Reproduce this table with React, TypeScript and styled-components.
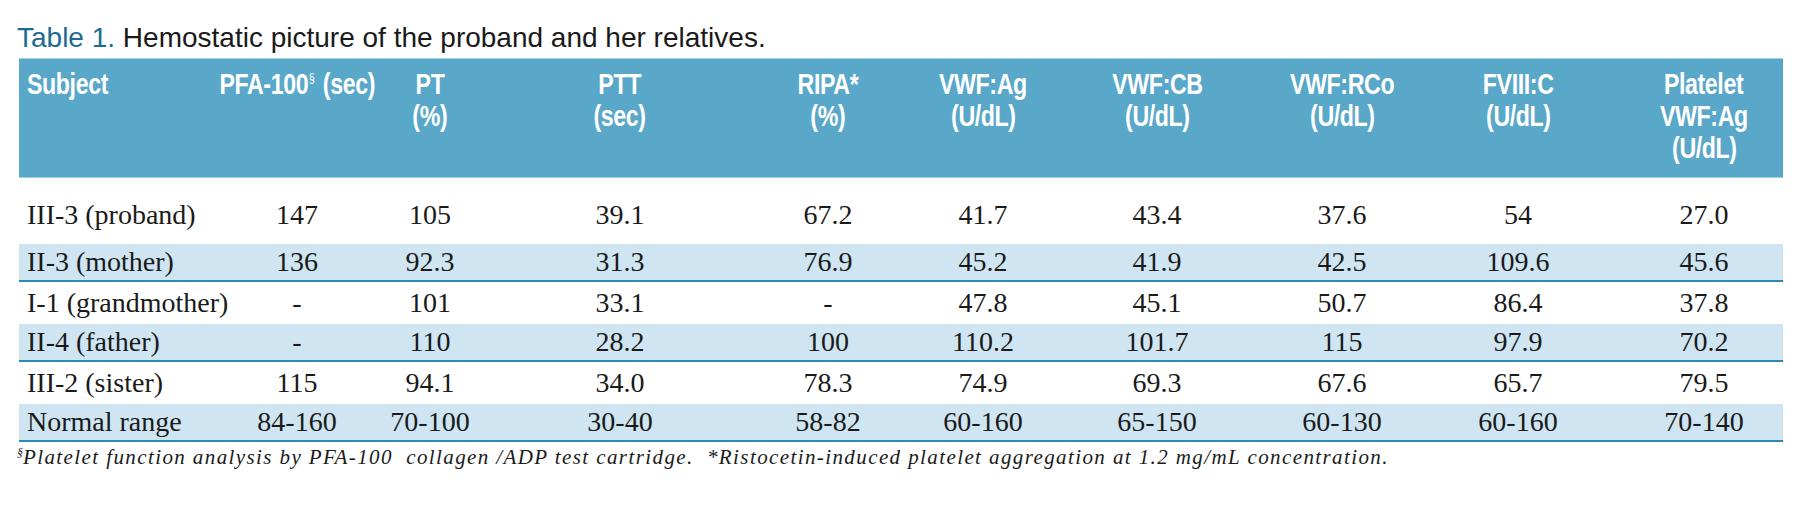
import React from 'react'
import styled, { createGlobalStyle } from 'styled-components'

const GlobalStyle = createGlobalStyle`
  html, body {
    margin: 0;
    padding: 0;
    background: #ffffff;
  }
`

const Colors = {
  Band: '#5aa8c9',
  BandEdge: '#9fcfe2',
  Shade: '#cfe5f2',
  Rule: '#2a8ab6',
  TitleBlue: '#1d6b93',
  Ink: '#1a1a1a',
}

const COLUMNS = '224px 108px 158px 222px 194px 116px 232px 138px 214px 158px'

const HEADERS: string[][] = [
  ['Subject'],
  ['PFA-100§ (sec)'],
  ['PT', '(%)'],
  ['PTT', '(sec)'],
  ['RIPA*', '(%)'],
  ['VWF:Ag', '(U/dL)'],
  ['VWF:CB', '(U/dL)'],
  ['VWF:RCo', '(U/dL)'],
  ['FVIII:C', '(U/dL)'],
  ['Platelet', 'VWF:Ag', '(U/dL)'],
]

const ROWS: string[][] = [
  ['III-3 (proband)', '147', '105', '39.1', '67.2', '41.7', '43.4', '37.6', '54', '27.0'],
  ['II-3 (mother)', '136', '92.3', '31.3', '76.9', '45.2', '41.9', '42.5', '109.6', '45.6'],
  ['I-1 (grandmother)', '-', '101', '33.1', '-', '47.8', '45.1', '50.7', '86.4', '37.8'],
  ['II-4 (father)', '-', '110', '28.2', '100', '110.2', '101.7', '115', '97.9', '70.2'],
  ['III-2 (sister)', '115', '94.1', '34.0', '78.3', '74.9', '69.3', '67.6', '65.7', '79.5'],
  ['Normal range', '84-160', '70-100', '30-40', '58-82', '60-160', '65-150', '60-130', '60-160', '70-140'],
]

const renderLabel = (text: string) => {
  if (!text.includes('§')) return text
  const [before, after] = text.split('§')
  return (
    <>
      {before}
      <Mark>§</Mark>
      {after}
    </>
  )
}

export default function App() {
  return (
    <Page>
      <GlobalStyle />
      <Title>
        <TitleNumber>Table 1.</TitleNumber> Hemostatic picture of the proband and her relatives.
      </Title>

      <Table>
        <HeaderRow>
          {HEADERS.map((lines, i) => (
            <HeaderCell key={i} $left={i === 0}>
              {lines.map((line, j) => (
                <HeaderLine key={j} $left={i === 0}>
                  {renderLabel(line)}
                </HeaderLine>
              ))}
            </HeaderCell>
          ))}
        </HeaderRow>

        {ROWS.map((row, r) => (
          <BodyRow key={row[0]} $shaded={r % 2 === 1} $first={r === 0}>
            {row.map((value, c) => (
              <BodyCell key={c} $left={c === 0}>
                {value}
              </BodyCell>
            ))}
          </BodyRow>
        ))}
      </Table>

      <Footnote>
        <FootMark>§</FootMark>
        {'Platelet function analysis by PFA-100  collagen /ADP test cartridge.  *Ristocetin-induced platelet aggregation at 1.2 mg/mL concentration.'}
      </Footnote>
    </Page>
  )
}

const Page = styled.div`
  width: 1800px;
  height: 521px;
  box-sizing: border-box;
  padding: 22px 17px 0 17px;
  display: flex;
  flex-direction: column;
  align-items: flex-start;
  overflow: hidden;
`

const Title = styled.div`
  font-family: 'Liberation Sans', Arial, sans-serif;
  font-size: 28px;
  line-height: 31px;
  color: ${Colors.Ink};
  white-space: nowrap;
  margin-bottom: 5px;
`

const TitleNumber = styled.span`
  color: ${Colors.TitleBlue};
`

const Table = styled.div`
  margin-left: 2px;
  display: flex;
  flex-direction: column;
  width: 1764px;
`

const HeaderRow = styled.div`
  display: grid;
  grid-template-columns: ${COLUMNS};
  height: 120px;
  box-sizing: border-box;
  padding-top: 9px;
  background: ${Colors.Band};
  border-top: 1px solid ${Colors.BandEdge};
  border-bottom: 1px solid ${Colors.BandEdge};
`

const HeaderCell = styled.div<{ $left?: boolean }>`
  display: flex;
  flex-direction: column;
  align-items: ${(p) => (p.$left ? 'flex-start' : 'center')};
  padding-left: ${(p) => (p.$left ? '8px' : '0')};
  font-family: 'Liberation Sans', Arial, sans-serif;
  font-weight: 700;
  font-size: 29px;
  line-height: 32px;
  color: #ffffff;
`

/* the printed table uses a tightly condensed bold face */
const HeaderLine = styled.span<{ $left?: boolean }>`
  display: inline-block;
  white-space: nowrap;
  letter-spacing: -0.5px;
  transform: scaleX(0.8);
  transform-origin: ${(p) => (p.$left ? 'left center' : 'center center')};
`

const Mark = styled.sup`
  font-size: 13px;
  line-height: 0;
  vertical-align: 12px;
  font-weight: 400;
  margin: 0 3px 0 1px;
`

const BodyRow = styled.div<{ $shaded: boolean; $first: boolean }>`
  display: grid;
  grid-template-columns: ${COLUMNS};
  align-items: center;
  box-sizing: border-box;
  height: ${(p) => (p.$shaded ? '38px' : p.$first ? '66px' : '42px')};
  padding-top: ${(p) => (p.$first ? '16px' : '0')};
  padding-bottom: ${(p) => (p.$first ? '8px' : '0')};
  background: ${(p) => (p.$shaded ? Colors.Shade : '#ffffff')};
  border-bottom: ${(p) => (p.$shaded ? `2px solid ${Colors.Rule}` : 'none')};
`

const BodyCell = styled.div<{ $left?: boolean }>`
  font-family: 'Liberation Serif', 'Times New Roman', serif;
  font-size: 28px;
  line-height: 32px;
  color: ${Colors.Ink};
  white-space: nowrap;
  text-align: ${(p) => (p.$left ? 'left' : 'center')};
  padding-left: ${(p) => (p.$left ? '8px' : '0')};
`

const Footnote = styled.div`
  margin-top: 3px;
  font-family: 'Liberation Serif', 'Times New Roman', serif;
  font-style: italic;
  font-size: 21px;
  line-height: 24px;
  letter-spacing: 1.4px;
  color: ${Colors.Ink};
  white-space: pre;
`

const FootMark = styled.sup`
  font-size: 12px;
  line-height: 0;
  vertical-align: 7px;
  letter-spacing: 0;
`
